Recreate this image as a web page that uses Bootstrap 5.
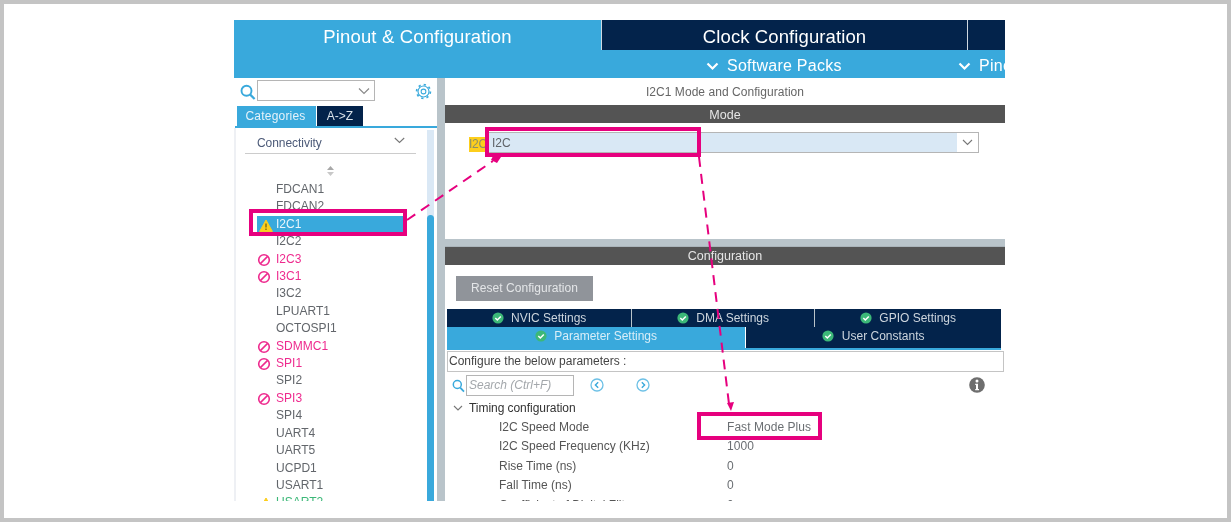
<!DOCTYPE html>
<html lang="en">
<head>
<meta charset="utf-8">
<title>I2C1 Mode and Configuration</title>
<link href="https://cdn.jsdelivr.net/npm/bootstrap@5.3.0/dist/css/bootstrap.min.css" rel="stylesheet">
<style>
html,body{margin:0;background:#fff;overflow:hidden}
body{font-family:"Liberation Sans",Arial,sans-serif;color:#5f6368;font-size:12px}
.frame{position:relative;width:1231px;height:522px;border:4px solid #c4c4c4;padding:16px 0 0 230px}
.app{width:771px;height:481px;overflow:hidden;background:#fff;filter:blur(.3px)}
.c-blue{background:#39a9dc}
.c-navy{background:#03234b}
.top-tab{height:58px;width:367px;color:#fff;font-size:18.5px;line-height:33px;text-align:center;letter-spacing:.15px}
.top-nav{height:58px}
.clock-row{height:30px}
.clock-tab{width:366px;color:#fff;font-size:18.5px;line-height:33px;text-align:center;border-left:1px solid #cfd8e0;letter-spacing:.1px}
.clock-more{width:38px;border-left:1px solid #cfd8e0}
.soft-row{height:28px;color:#fff;font-size:16px;letter-spacing:.25px;line-height:31px}
.soft-a{margin-left:105px;width:252px;white-space:nowrap;flex-shrink:0}
.soft-b{white-space:nowrap;flex-shrink:0}
.left-pane{width:203px;height:423px;overflow:hidden}
.splitter{width:8px;background:#b9c4ca}
.right-pane{width:560px}
.search-row{height:28px;padding:2px 0 0 6px}
.sel-box{width:118px;height:21px;margin-left:1px;border:1px solid #b5b5b5;background:#fff}
.cat-tabs{height:20px;padding-left:3px;margin-top:0}
.cat-on{width:79px;color:#e4f2fa;font-size:12px;line-height:20px;text-align:center;padding-right:2px;letter-spacing:.2px}
.cat-off{width:46px;margin-left:1px;color:#dbe3ea;font-size:12px;line-height:20px;text-align:center}
.cat-line{height:2px;margin-left:1px;background:#39a9dc}
.list-wrap{height:373px;border-left:2px solid #eef0f4;margin-left:0;overflow:hidden}
.list-main{width:191px}
.conn-row{width:171px;height:26px;margin-left:9px;border-bottom:1px solid #ccc;color:#4c5a78;font-size:12px;padding:6px 0 0 12px;letter-spacing:-.05px}
.updown{height:23px}
.cube-list{margin:4px 0 0}
.cube-list li{height:17.42px;line-height:17.42px;padding-left:40px;position:relative;white-space:nowrap;font-size:12px;color:#62666b;letter-spacing:.03px}
.cube-list li svg{position:absolute;left:21px;top:2px}
.cube-list li.pink{color:#ee2a8e}
.cube-list li.green{color:#3cb878}
.cube-list li.sel{color:#e9f5fb}
.cube-list li.sel:before{content:"";position:absolute;left:20px;right:23px;top:0;bottom:0;background:#39a9dc;border-left:1px solid #fff;z-index:0}
.cube-list li.sel span,.cube-list li.sel svg{position:absolute;z-index:1}
.cube-list li.sel span{left:40px}
.cube-track{width:7px;background:#dae8f5;margin-top:2px;position:relative;height:371px}
.cube-thumb{width:7px;height:100%;margin-top:85px;background:#39a9dc;border-radius:4px 4px 0 0}
.pane-title{height:27px;text-align:center;font-size:12px;line-height:28px;color:#666;letter-spacing:.05px}
.dark-bar{height:18px;background:#545454;color:#e6e6e6;text-align:center;font-size:12.5px;line-height:20px}
.dark-bar.conf-bar{line-height:18px}
.mode-area{height:116px;padding:9px 0 0 24px}
.i2c-tag{background:#fdce1c;color:#8a8f6a;width:17px;height:15px;line-height:15px;margin-top:5px;font-size:12px;white-space:nowrap;letter-spacing:-.3px}
.mode-sel{width:491px;height:21px;margin-left:2px;border:1px solid #b5b5b5;background:#d9e8f5;font-size:12px;line-height:21px;padding-left:3px;color:#5f6368}
.mode-caret{width:21px;height:19px;background:#fff}
.gray-band{height:8px;background:#b9c4ca;border-bottom:1px solid #aab4ba}
.reset-wrap{height:44px;padding:11px 0 0 11px}
.reset-btn{width:137px;height:25px;background:#90949a;color:#e4e6e8;font-size:12px;border:0;border-radius:0;padding:0;line-height:25px;letter-spacing:.05px}
.tabs-wrap{width:554px;margin-left:2px}
.tab-a{height:18px;color:#cdd5dd;font-size:12px;line-height:19px;text-align:center;white-space:nowrap}
.tab-a+.tab-a{border-left:1px solid #b9c4ca}
.w1{width:184px}.w2{width:183px}.w3{width:187px}
.tab-b{height:21px;font-size:12px;line-height:19px;text-align:center;color:#cdd5dd;margin-top:0;white-space:nowrap}
.tab-b.w-on{width:298px;color:#d8eef8}
.tab-b.w-off{width:255px;margin-left:1px}
.tab-b svg,.tab-a svg{vertical-align:-2px;margin-right:4px}
.line-blue{height:2px;background:#39a9dc}
.conf-box{width:557px;height:21px;margin:1px 0 0 2px;border:1px solid #c4c4c4;font-size:12px;line-height:19px;padding-left:1px;color:#444;white-space:nowrap}
.tools{height:26px;padding:3px 0 0 7px;position:relative;width:558px}
.search-in{width:108px;height:21px;margin-left:1px;border:1px solid #b5b5b5;color:#a3a7ab;font-style:italic;line-height:19px;padding-left:2px;font-size:12px}
.tree-head{height:20px;line-height:20px;padding-left:8px;color:#333;letter-spacing:-.05px;margin-top:0}
.tree-head span{margin-left:6px}
.param{height:19.4px;line-height:19.4px;white-space:nowrap;color:#555}
.param .pk{width:282px;padding-left:54px}
.param .pv{color:#6a6e72;letter-spacing:.05px}
.overlay{position:absolute;left:-4px;top:-4px;width:1231px;height:522px;pointer-events:none}
</style>
</head>
<body>
<div class="frame">
 <div class="app d-flex flex-column">
  <div class="d-flex top-nav">
   <div class="top-tab c-blue flex-shrink-0">Pinout &amp; Configuration</div>
   <div class="flex-grow-1 d-flex flex-column" style="min-width:0">
    <div class="clock-row c-navy d-flex"><div class="clock-tab">Clock Configuration</div><div class="clock-more"></div></div>
    <div class="soft-row c-blue d-flex overflow-hidden">
     <div class="soft-a"><svg width="13" height="9" viewBox="0 0 13 9" class="me-2"><path d="M1.5 1.5 6.500 6.500 11.500 1.500" fill="none" stroke="#fff" stroke-width="2.2"/></svg>Software Packs</div>
     <div class="soft-b"><svg width="13" height="9" viewBox="0 0 13 9" class="me-2"><path d="M1.500 1.500 6.500 6.500 11.500 1.500" fill="none" stroke="#fff" stroke-width="2.2"/></svg>Pinout</div>
    </div>
   </div>
  </div>
  <div class="d-flex flex-grow-1">
   <div class="left-pane flex-shrink-0">
    <div class="search-row d-flex align-items-start">
     <svg width="16" height="17" viewBox="0 0 16 17" class="mt-1"><circle cx="6.500" cy="6.800" r="5" fill="none" stroke="#39a9dc" stroke-width="1.9"/><path d="M10.200 10.600 14.600 15" stroke="#39a9dc" stroke-width="2.2"/></svg>
     <div class="sel-box d-flex justify-content-end align-items-center pe-1"><svg width="12" height="8" viewBox="0 0 12 8"><path d="M1 1.500 6 6.500 11 1.500" fill="none" stroke="#8a8a8a" stroke-width="1.2"/></svg></div>
     <svg width="17" height="17" viewBox="0 0 18 18" class="ms-auto" style="margin:3px 5px 0 0"><circle cx="9" cy="9" r="5.800" fill="none" stroke="#39a9dc" stroke-width="1.200"/><circle cx="9" cy="9" r="2.500" fill="none" stroke="#39a9dc" stroke-width="1.100"/><circle cx="9" cy="9" r="7.300" fill="none" stroke="#39a9dc" stroke-width="1.800" stroke-dasharray="2.400 3.330"/></svg>
    </div>
    <div class="cat-tabs d-flex"><div class="cat-on c-blue">Categories</div><div class="cat-off c-navy">A-&gt;Z</div></div>
    <div class="cat-line"></div>
    <div class="list-wrap d-flex">
     <div class="list-main">
      <div class="conn-row d-flex justify-content-between">Connectivity<svg width="11" height="7" viewBox="0 0 11 7" style="margin:3px 11px 0 0"><path d="M.8 1 5.500 5.500 10.200 1" fill="none" stroke="#777" stroke-width="1.100"/></svg></div>
      <div class="updown text-center" style="padding:11px 3px 0 0"><svg width="9" height="12" viewBox="0 0 9 12" style="display:block;margin:0 auto"><path d="M4.500 1 8 5H1Z" fill="#a8a8a8"/><path d="M4.500 11 8 7H1Z" fill="#c8c8c8"/></svg></div>
      <ul class="list-unstyled cube-list">
       <li>FDCAN1</li><li>FDCAN2</li>
       <li class="sel"><svg width="14" height="13" viewBox="0 0 14 13" style="left:23px;top:3px"><path d="M7 1 13.400 12.400H.6Z" fill="#fdce1c" stroke="#fdce1c" stroke-linejoin="round"/><path d="M7 4.500V8.600M7 9.600V11" stroke="#6b5a10" stroke-width="1.200"/></svg><span>I2C1</span></li>
       <li>I2C2</li>
       <li class="pink"><svg width="14" height="14" viewBox="0 0 14 14"><circle cx="7" cy="7" r="5.300" fill="none" stroke="#ee2a8e" stroke-width="1.600"/><path d="M3.400 10.600 10.600 3.400" stroke="#ee2a8e" stroke-width="1.600"/></svg>I2C3</li>
       <li class="pink"><svg width="14" height="14" viewBox="0 0 14 14"><circle cx="7" cy="7" r="5.300" fill="none" stroke="#ee2a8e" stroke-width="1.600"/><path d="M3.400 10.600 10.600 3.400" stroke="#ee2a8e" stroke-width="1.600"/></svg>I3C1</li>
       <li>I3C2</li><li>LPUART1</li><li>OCTOSPI1</li>
       <li class="pink"><svg width="14" height="14" viewBox="0 0 14 14"><circle cx="7" cy="7" r="5.300" fill="none" stroke="#ee2a8e" stroke-width="1.600"/><path d="M3.400 10.600 10.600 3.400" stroke="#ee2a8e" stroke-width="1.600"/></svg>SDMMC1</li>
       <li class="pink"><svg width="14" height="14" viewBox="0 0 14 14"><circle cx="7" cy="7" r="5.300" fill="none" stroke="#ee2a8e" stroke-width="1.600"/><path d="M3.400 10.600 10.600 3.400" stroke="#ee2a8e" stroke-width="1.600"/></svg>SPI1</li>
       <li>SPI2</li>
       <li class="pink"><svg width="14" height="14" viewBox="0 0 14 14"><circle cx="7" cy="7" r="5.300" fill="none" stroke="#ee2a8e" stroke-width="1.600"/><path d="M3.400 10.600 10.600 3.400" stroke="#ee2a8e" stroke-width="1.600"/></svg>SPI3</li>
       <li>SPI4</li><li>UART4</li><li>UART5</li><li>UCPD1</li><li>USART1</li>
       <li class="green"><svg width="14" height="13" viewBox="0 0 14 13" style="left:23px;top:3px"><path d="M7 1 13.400 12.400H.6Z" fill="#fdce1c" stroke="#fdce1c" stroke-linejoin="round"/></svg>USART2</li>
      </ul>
     </div>
     <div class="cube-track flex-shrink-0"><div class="cube-thumb"></div></div>
    </div>
   </div>
   <div class="splitter flex-shrink-0"></div>
   <div class="right-pane flex-shrink-0">
    <div class="pane-title">I2C1 Mode and Configuration</div>
    <div class="dark-bar">Mode</div>
    <div class="mode-area d-flex align-items-start">
     <div class="i2c-tag">I2C</div>
     <div class="mode-sel d-flex justify-content-between"><span>I2C</span><div class="mode-caret d-flex justify-content-center align-items-center"><svg width="11" height="7" viewBox="0 0 11 7"><path d="M1 1 5.500 5.500 10 1" fill="none" stroke="#777" stroke-width="1.100"/></svg></div></div>
    </div>
    <div class="gray-band"></div>
    <div class="dark-bar conf-bar">Configuration</div>
    <div class="reset-wrap"><button class="btn reset-btn" type="button">Reset Configuration</button></div>
    <div class="tabs-wrap">
     <div class="d-flex c-navy">
      <div class="tab-a w1"><svg width="12" height="12" viewBox="0 0 12 12"><circle cx="6" cy="6" r="5.600" fill="#3cb878"/><path d="M3.300 6 5.300 8 8.800 4.400" fill="none" stroke="#fff" stroke-width="1.500"/></svg> NVIC Settings</div>
      <div class="tab-a w2"><svg width="12" height="12" viewBox="0 0 12 12"><circle cx="6" cy="6" r="5.600" fill="#3cb878"/><path d="M3.300 6 5.300 8 8.800 4.400" fill="none" stroke="#fff" stroke-width="1.500"/></svg> DMA Settings</div>
      <div class="tab-a w3"><svg width="12" height="12" viewBox="0 0 12 12"><circle cx="6" cy="6" r="5.600" fill="#3cb878"/><path d="M3.300 6 5.300 8 8.800 4.400" fill="none" stroke="#fff" stroke-width="1.500"/></svg> GPIO Settings</div>
     </div>
     <div class="d-flex">
      <div class="tab-b w-on c-blue"><svg width="12" height="12" viewBox="0 0 12 12"><circle cx="6" cy="6" r="5.600" fill="#3cb878"/><path d="M3.300 6 5.300 8 8.800 4.400" fill="none" stroke="#fff" stroke-width="1.500"/></svg> Parameter Settings</div>
      <div class="tab-b w-off c-navy"><svg width="12" height="12" viewBox="0 0 12 12"><circle cx="6" cy="6" r="5.600" fill="#3cb878"/><path d="M3.300 6 5.300 8 8.800 4.400" fill="none" stroke="#fff" stroke-width="1.500"/></svg> User Constants</div>
     </div>
     <div class="line-blue"></div>
    </div>
    <div class="conf-box">Configure the below parameters :</div>
    <div class="tools d-flex align-items-start">
     <svg width="13" height="14" viewBox="0 0 13 14" class="mt-1"><circle cx="5.300" cy="5.500" r="4" fill="none" stroke="#39a9dc" stroke-width="1.500"/><path d="M8.200 8.600 12 12.600" stroke="#39a9dc" stroke-width="1.800"/></svg>
     <div class="search-in">Search (Ctrl+F)</div>
     <svg width="14" height="14" viewBox="0 0 14 14" style="margin:3px 0 0 16px"><circle cx="7" cy="7" r="6" fill="none" stroke="#6cc0e6" stroke-width="1.300"/><path d="M8.200 4.200 5.400 7 8.200 9.800" fill="none" stroke="#39a9dc" stroke-width="1.400"/></svg>
     <svg width="14" height="14" viewBox="0 0 14 14" style="margin:3px 0 0 32px"><circle cx="7" cy="7" r="6" fill="none" stroke="#6cc0e6" stroke-width="1.300"/><path d="M5.800 4.200 8.600 7 5.800 9.800" fill="none" stroke="#39a9dc" stroke-width="1.400"/></svg>
     <svg width="16" height="16" viewBox="0 0 16 16" class="ms-auto" style="margin:2px 18px 0 0"><circle cx="8" cy="8" r="7.800" fill="#6e6e6e"/><circle cx="8" cy="4" r="1.500" fill="#fff"/><path d="M6.200 6.800H9V12H10V13.200H6.200V12H7V8H6.200Z" fill="#fff"/></svg>
    </div>
    <div class="tree-head d-flex align-items-center"><svg width="10" height="7" viewBox="0 0 10 7"><path d="M1 1 5 5 9 1" fill="none" stroke="#777" stroke-width="1.100"/></svg><span>Timing configuration</span></div>
    <div class="param d-flex"><div class="pk">I2C Speed Mode</div><div class="pv">Fast Mode Plus</div></div>
    <div class="param d-flex"><div class="pk">I2C Speed Frequency (KHz)</div><div class="pv">1000</div></div>
    <div class="param d-flex"><div class="pk">Rise Time (ns)</div><div class="pv">0</div></div>
    <div class="param d-flex"><div class="pk">Fall Time (ns)</div><div class="pv">0</div></div>
    <div class="param d-flex"><div class="pk">Coefficient of Digital Filter</div><div class="pv">0</div></div>
   </div>
  </div>
 </div>
 <svg class="overlay" viewBox="0 0 1231 522">
  <g fill="none" stroke="#e6007e" stroke-width="4">
   <rect x="251" y="211" width="154" height="23"/>
   <rect x="487" y="129" width="212" height="26"/>
   <rect x="699" y="414" width="121" height="24"/>
   <path d="M407 220 493 161" stroke-width="2" stroke-dasharray="10 7"/>
   <path d="M699 157 729 404" stroke-width="2" stroke-dasharray="10 7"/>
  </g>
  <path d="M493 156 501 157 497 163 491 160Z" fill="#e6007e"/>
  <path d="M727 403 734 402 731 411Z" fill="#e6007e"/>
 </svg>
</div>
<script src="https://cdn.jsdelivr.net/npm/bootstrap@5.3.0/dist/js/bootstrap.bundle.min.js"></script>
</body>
</html>
